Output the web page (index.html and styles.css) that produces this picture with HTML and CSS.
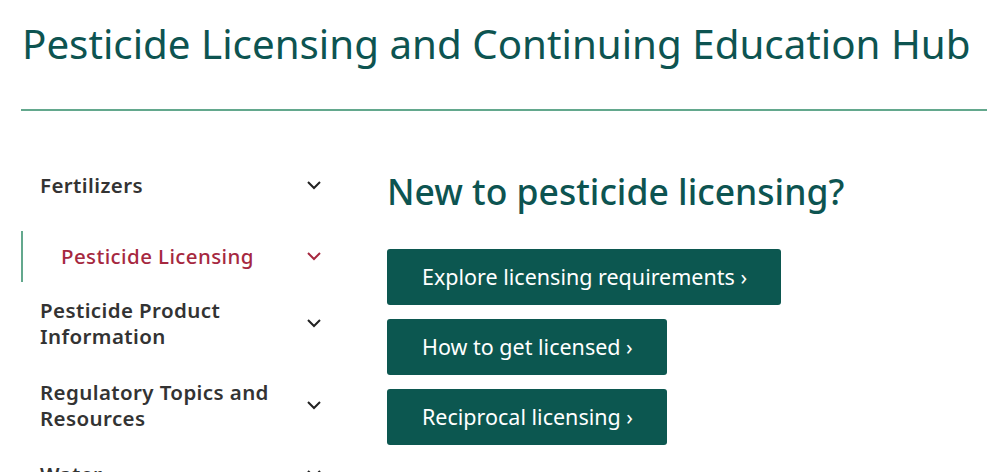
FILE: index.html
```html
<!DOCTYPE html>
<html lang="en">
<head>
    <meta charset="UTF-8">
    <meta name="viewport" content="width=device-width, initial-scale=1.0">
    <title>Pesticide Licensing and Continuing Education Hub</title>
    <link rel="stylesheet" href="styles.css">
</head>
<body>
    <header class="page-header">
        <h1>Pesticide Licensing and Continuing Education Hub</h1>
    </header>

    <div class="layout">
        <nav class="side-nav">
            <ul>
                <li class="nav-item">
                    <a href="#">Fertilizers</a>
                    <svg class="chevron" viewBox="0 0 16 10"><path d="M2 2l6 6 6-6"/></svg>
                </li>
                <li class="nav-item active">
                    <a href="#">Pesticide Licensing</a>
                    <svg class="chevron" viewBox="0 0 16 10"><path d="M2 2l6 6 6-6"/></svg>
                </li>
                <li class="nav-item">
                    <a href="#">Pesticide Product Information</a>
                    <svg class="chevron" viewBox="0 0 16 10"><path d="M2 2l6 6 6-6"/></svg>
                </li>
                <li class="nav-item">
                    <a href="#">Regulatory Topics and Resources</a>
                    <svg class="chevron" viewBox="0 0 16 10"><path d="M2 2l6 6 6-6"/></svg>
                </li>
                <li class="nav-item">
                    <a href="#">Water</a>
                    <svg class="chevron" viewBox="0 0 16 10"><path d="M2 2l6 6 6-6"/></svg>
                </li>
            </ul>
        </nav>

        <main class="content">
            <h2>New to pesticide licensing?</h2>
            <div class="button-list">
                <a class="btn" href="#">Explore licensing requirements ›</a>
                <a class="btn" href="#">How to get licensed ›</a>
                <a class="btn" href="#">Reciprocal licensing ›</a>
            </div>
        </main>
    </div>
</body>
</html>
```

FILE: styles.css
```css
body {
    font-family: "Noto Sans", Arial, sans-serif;
    color: #333;
    background-color: #fff;
    margin: 0;
    padding: 0 0 0 21px;
}
.page-header {
    border-bottom: 2px solid #63a88d;
    padding: 18px 0 39px 1px;
}
.page-header h1 {
    margin: 0;
    font-size: 40.3px;
    font-weight: 400;
    line-height: 52px;
    color: #0d5451;
    white-space: nowrap;
}
.layout {
    display: grid;
    grid-template-columns: 301px 1fr;
    column-gap: 65px;
}
.side-nav ul {
    list-style: none;
    margin: 46px 0 0;
    padding: 0;
}
.nav-item {
    display: flex;
    justify-content: space-between;
    align-items: center;
    padding: 15px 0 15px 19px;
}
.nav-item a {
    color: #333;
    font-size: 20.5px;
    font-weight: 600;
    letter-spacing: 0.4px;
    line-height: 26px;
    text-decoration: none;
    max-width: 240px;
}
.nav-item.active {
    margin-top: 18px;
    padding: 12px 0 13px 38px;
    border-left: 2px solid #63a88d;
}
.nav-item.active a {
    color: #a6283f;
    font-weight: 500;
}
.chevron {
    width: 16px;
    height: 10px;
    flex-shrink: 0;
    fill: none;
    stroke: #222;
    stroke-width: 2;
}
.nav-item.active .chevron {
    stroke: #a6283f;
}
.content h2 {
    margin: 60px 0 38px;
    font-size: 35.5px;
    font-weight: 500;
    line-height: 40px;
    color: #0d5451;
}
.button-list {
    display: flex;
    flex-direction: column;
    align-items: flex-start;
    gap: 14px;
}
.btn {
    display: block;
    background-color: #0c5750;
    color: #fff;
    font-size: 21.5px;
    line-height: 56px;
    padding: 0 34px 0 35px;
    border-radius: 3px;
    text-decoration: none;
}
```
